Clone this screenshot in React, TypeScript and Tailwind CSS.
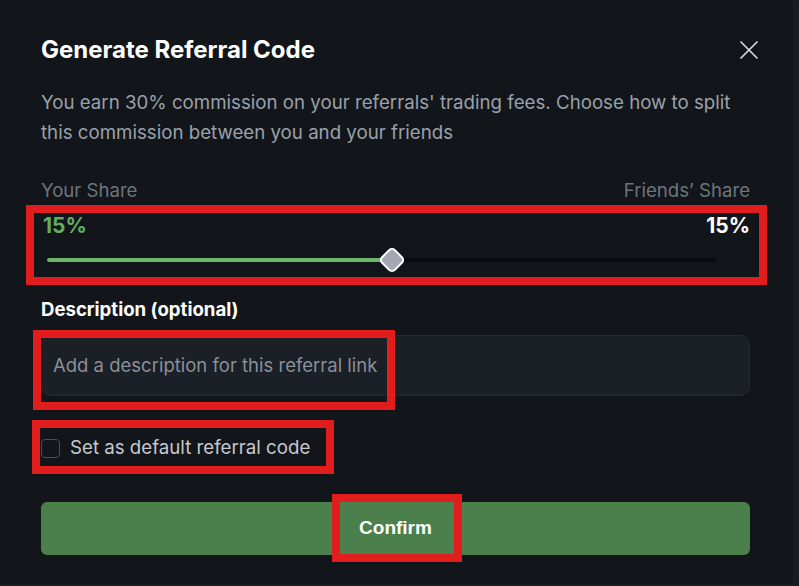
import { X } from "lucide-react";

const font = { fontFamily: "Inter, 'Noto Sans', sans-serif" };

export default function App() {
  const share = 51.6;

  return (
    <div className="w-[799px] h-[586px] bg-[#181c21] overflow-hidden" style={font}>
      <div className="relative w-[793px] h-[584px] bg-[#12161a] rounded-r-lg pl-[41px] pr-[43px] pt-[34px]">
        {/* Header */}
        <div className="flex items-center justify-between">
          <h1 className="text-[24px] leading-8 font-bold text-white">Generate Referral Code</h1>
          <button type="button" className="text-[#d4d7dc] -mr-[15px]">
            <X size={32} strokeWidth={1.3} />
          </button>
        </div>

        <p className="mt-[22px] text-[18.7px] leading-[30px] text-[#9aa1ab]">
          You earn 30% commission on your referrals' trading fees. Choose how to split this commission between you and your friends
        </p>

        {/* Share split */}
        <div className="mt-[30px] flex justify-between text-[18.6px] leading-6 text-[#6e747d]">
          <span>Your Share</span>
          <span>Friends’ Share</span>
        </div>
        <div className="mt-[12px] flex justify-between text-[21px] leading-6 font-bold">
          <span className="text-[#62ad60] ml-[2px]">15%</span>
          <span className="text-white">15%</span>
        </div>
        <div className="mt-[10px] h-6 ml-[6px] mr-[34px] relative flex items-center">
          <div className="w-full h-[4px] rounded-full bg-[#0a0c0f]">
            <div className="h-full rounded-full bg-[#6db56a]" style={{ width: `${share}%` }}></div>
          </div>
          <div
            className="absolute top-[2px] w-5 h-5 rounded-[5px] rotate-45 bg-[#a3a8b2] border-2 border-white"
            style={{ left: `calc(${share}% - 10px)` }}
          ></div>
        </div>

        {/* Description */}
        <div className="mt-[25px] text-[18.6px] leading-6 font-bold text-white">Description (optional)</div>
        <div className="mt-[14px] h-[61px] rounded-[10px] bg-[#1b1f26] border border-[#252a31] flex items-center px-[11px]">
          <span className="text-[18.5px] text-[#8a9099]">Add a description for this referral link</span>
        </div>

        <label className="mt-[40px] h-6 flex items-center gap-[10px]">
          <span className="w-[19px] h-[19px] rounded-[4px] border border-[#4a4f58]"></span>
          <span className="text-[18.7px] text-[#c5c9cf]">Set as default referral code</span>
        </label>

        <button
          type="button"
          className="mt-[42px] w-full h-[53px] rounded-[6px] bg-[#4b7f4c] text-white text-[19px] font-bold"
          style={{ fontFamily: "'Liberation Sans', Arial, sans-serif" }}
        >
          Confirm
        </button>

        {/* Annotation boxes */}
        <div className="absolute left-[26px] top-[205px] w-[741px] h-[80px] border-[8px] border-[#e21d1d]"></div>
        <div className="absolute left-[33px] top-[330px] w-[362px] h-[80px] border-[8px] border-[#e21d1d]"></div>
        <div className="absolute left-[32px] top-[420px] w-[302px] h-[54px] border-[8px] border-[#e21d1d]"></div>
        <div className="absolute left-[332px] top-[494px] w-[130px] h-[68px] border-[8px] border-[#e21d1d]"></div>
      </div>
    </div>
  );
}
